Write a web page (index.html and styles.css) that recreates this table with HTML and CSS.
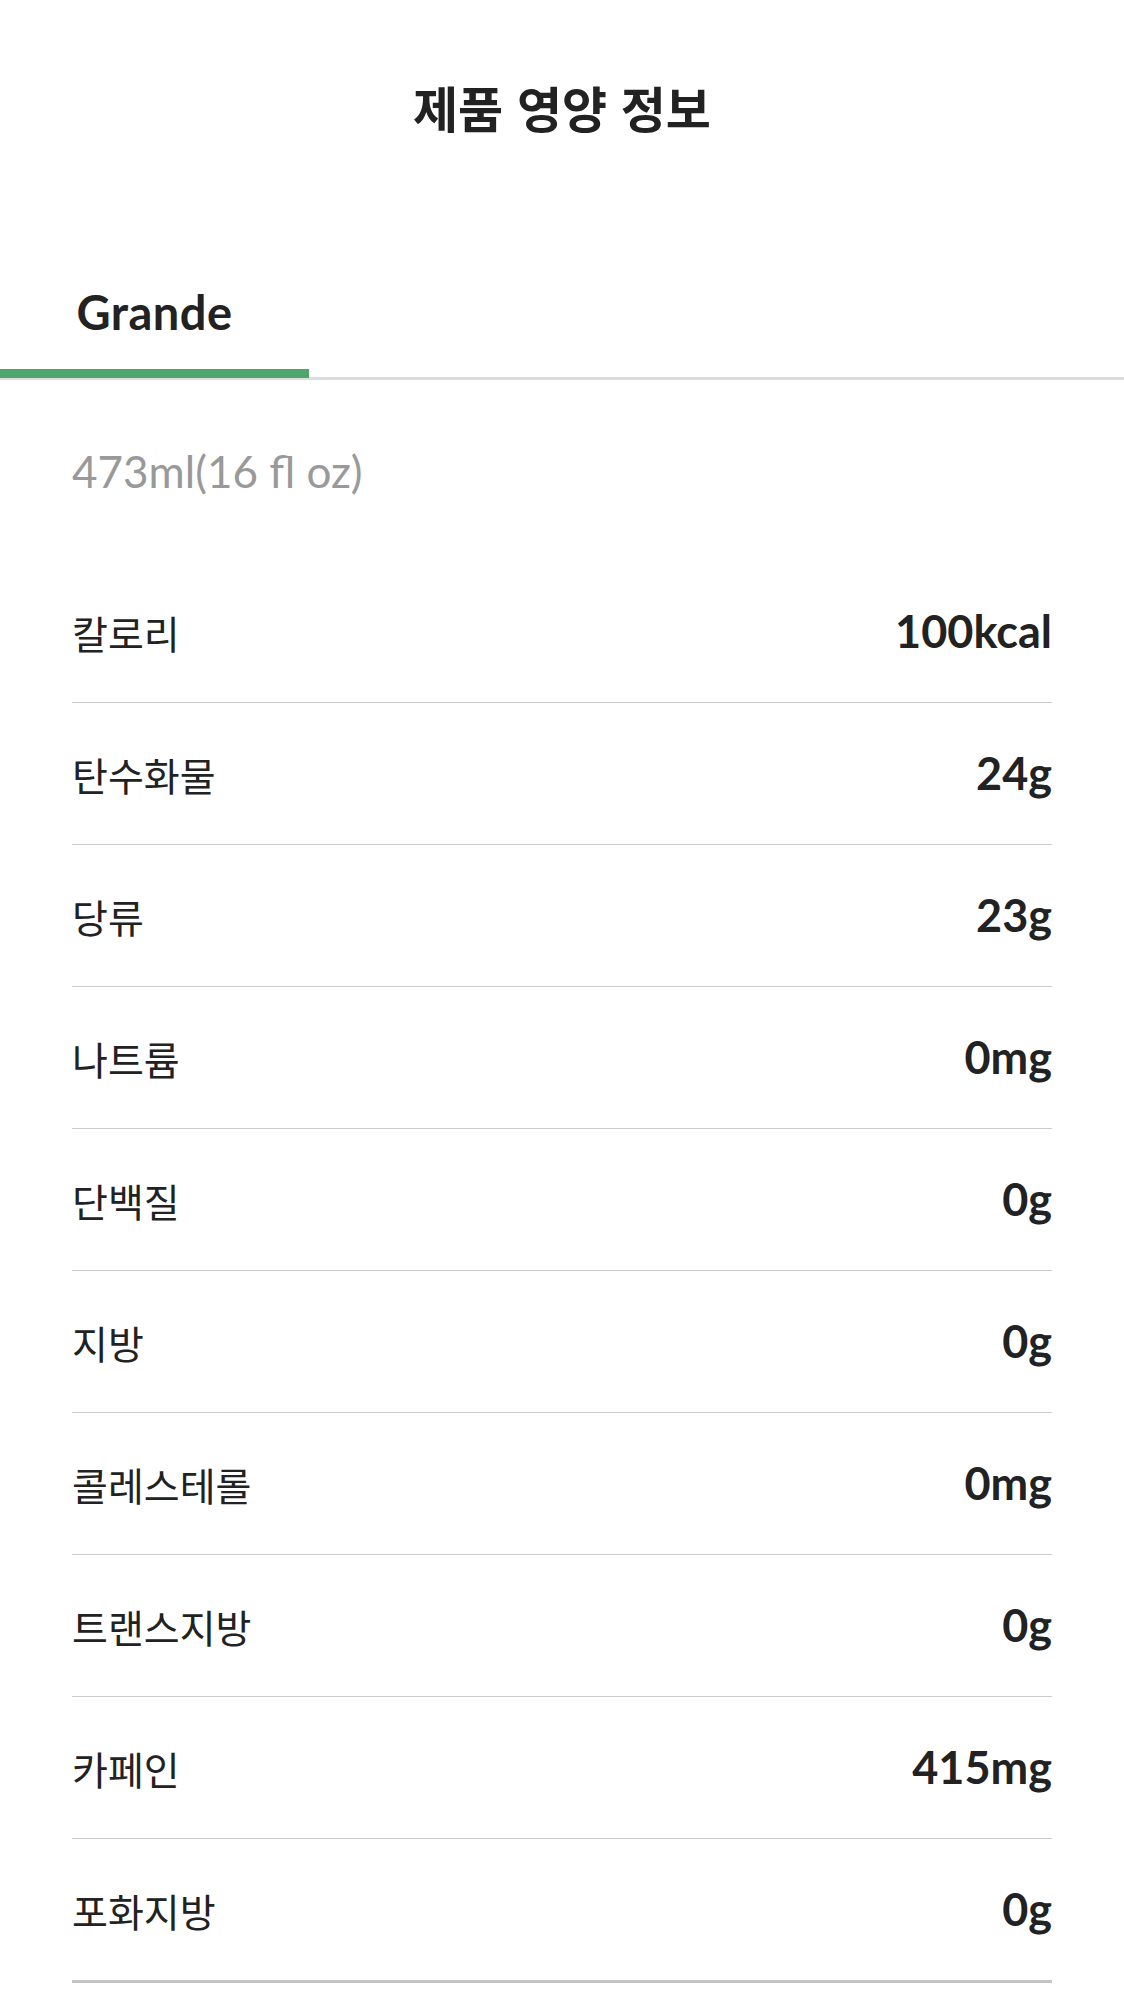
FILE: index.html
```html
<!DOCTYPE html>
<html lang="ko">
<head>
    <meta charset="UTF-8">
    <meta name="viewport" content="width=device-width, initial-scale=1.0">
    <title>제품 영양 정보</title>
    <link rel="stylesheet" href="styles.css">
</head>
<body>

    <div class="header">
        <h1 class="title">제품 영양 정보</h1>
    </div>

    <div class="tabs">
        <div class="tab active">Grande</div>
    </div>

    <div class="content">
        <p class="size">473ml(16 fl oz)</p>
        <ul class="nutrition">
            <li><span class="name">칼로리</span><span class="value">100kcal</span></li>
            <li><span class="name">탄수화물</span><span class="value">24g</span></li>
            <li><span class="name">당류</span><span class="value">23g</span></li>
            <li><span class="name">나트륨</span><span class="value">0mg</span></li>
            <li><span class="name">단백질</span><span class="value">0g</span></li>
            <li><span class="name">지방</span><span class="value">0g</span></li>
            <li><span class="name">콜레스테롤</span><span class="value">0mg</span></li>
            <li><span class="name">트랜스지방</span><span class="value">0g</span></li>
            <li><span class="name">카페인</span><span class="value">415mg</span></li>
            <li><span class="name">포화지방</span><span class="value">0g</span></li>
        </ul>
    </div>

</body>
</html>
```

FILE: styles.css
```css
* {
    padding: 0;
    margin: 0;
}
body {
    background: #ffffff;
    color: #222222;
    font-family: "Noto Sans CJK KR", "Noto Sans", sans-serif;
}
.header {
    padding-top: 78px;
    text-align: center;
}
.title {
    font-size: 49px;
    line-height: 58px;
    font-weight: 700;
    color: #222222;
}
.tabs {
    display: flex;
    margin-top: 150px;
    border-bottom: 3px solid #dddddd;
}
.tab {
    width: 309px;
    padding-bottom: 30px;
    font-family: Lato, "Noto Sans CJK KR", sans-serif;
    font-size: 47px;
    line-height: 53px;
    font-weight: 700;
    letter-spacing: 0.5px;
    text-align: center;
    color: #222222;
    border-bottom: 9px solid transparent;
    margin-bottom: -1px;
}
.tab.active {
    border-bottom-color: #4fa66c;
}
.content {
    padding: 0 72px;
}
.size {
    padding-top: 66px;
    font-family: Lato, sans-serif;
    font-size: 44px;
    line-height: 51px;
    color: #999999;
}
.nutrition {
    margin-top: 64px;
    list-style-type: none;
}
.nutrition li {
    display: flex;
    justify-content: space-between;
    align-items: center;
    height: 141px;
    border-bottom: 1px solid #cccccc;
}
.nutrition li:last-child {
    border-bottom: 3px solid #c4c4c4;
}
.name {
    font-size: 39px;
    line-height: 46px;
    color: #222222;
}
.value {
    font-family: Lato, sans-serif;
    font-size: 45px;
    line-height: 53px;
    font-weight: 700;
    color: #222222;
}
```
